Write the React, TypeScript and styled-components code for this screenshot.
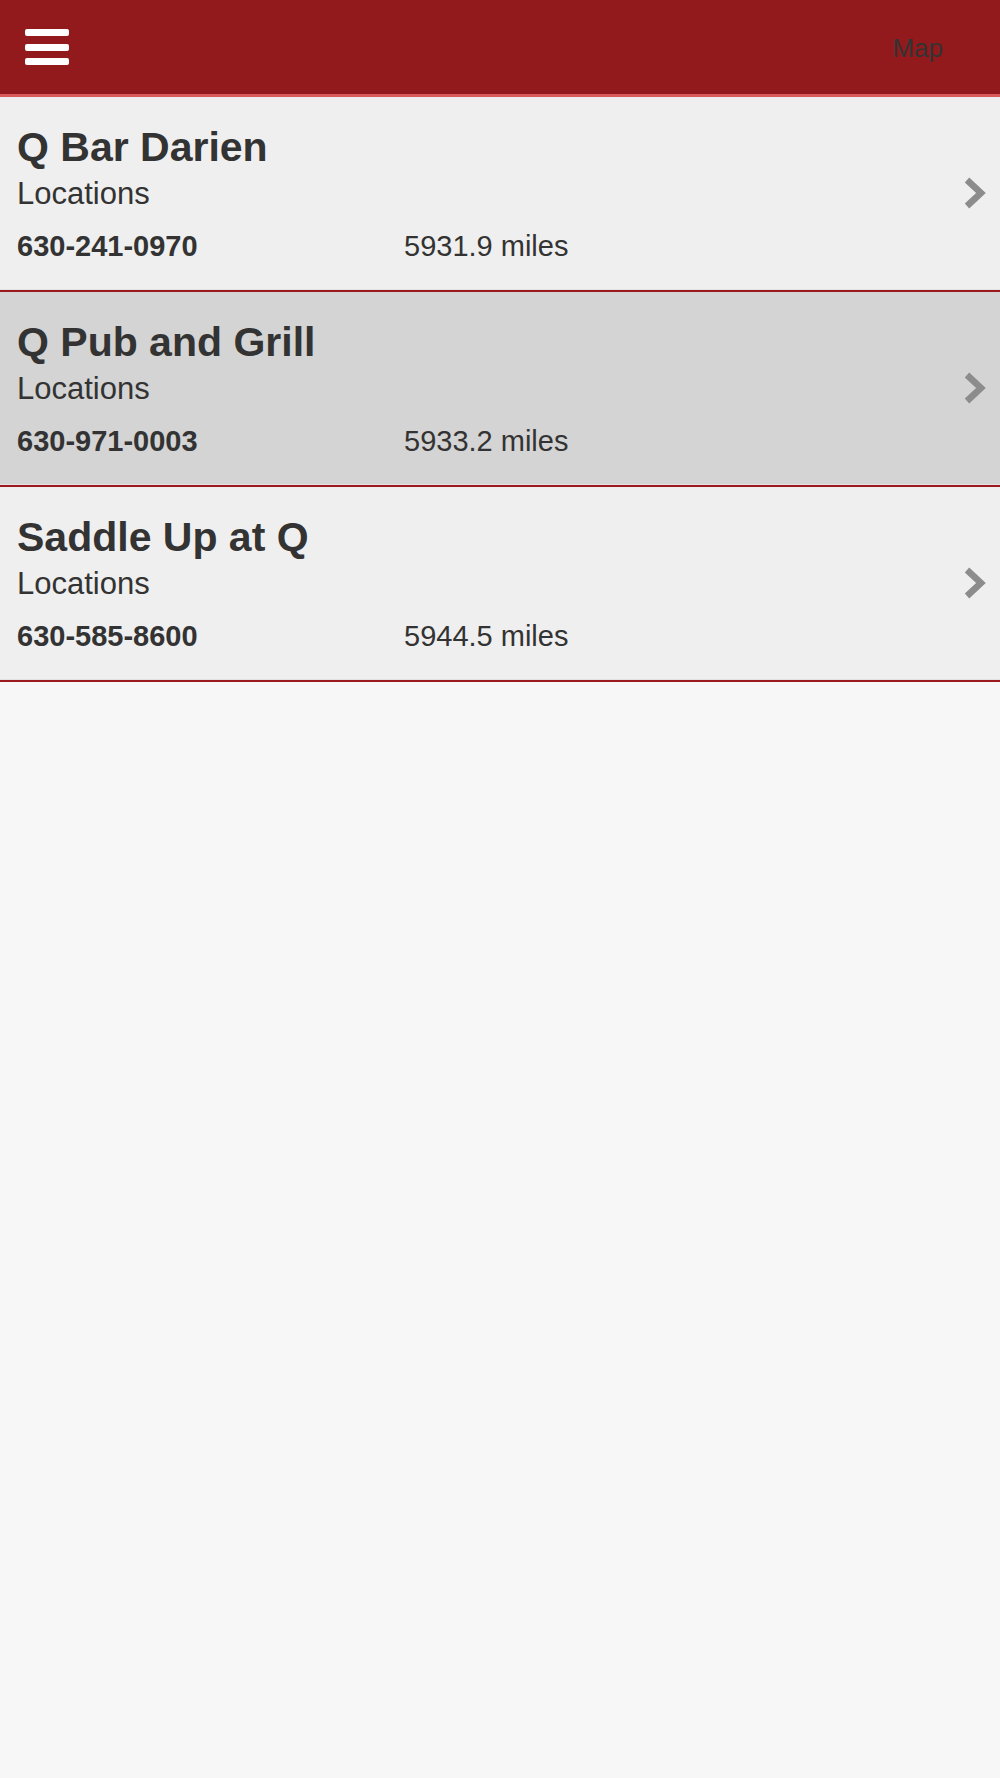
import styled, { createGlobalStyle } from "styled-components";

const GlobalStyle = createGlobalStyle`
  html, body {
    margin: 0;
    padding: 0;
    background: #f7f7f7;
  }
  body {
    font-family: "Liberation Sans", Arial, Helvetica, sans-serif;
    color: #333;
  }
`;

const locations = [
  { name: "Q Bar Darien", phone: "630-241-0970", distance: "5931.9 miles" },
  { name: "Q Pub and Grill", phone: "630-971-0003", distance: "5933.2 miles", active: true },
  { name: "Saddle Up at Q", phone: "630-585-8600", distance: "5944.5 miles" },
];

const App = () => {
  return (
    <Page>
      <GlobalStyle />
      <Header>
        <MenuButton aria-label="Menu">
          <Bar />
          <Bar />
          <Bar />
        </MenuButton>
        <MapLink>Map</MapLink>
      </Header>
      <List>
        {locations.map((loc) => (
          <Row key={loc.name} $active={loc.active}>
            <Details>
              <Title>{loc.name}</Title>
              <Category>Locations</Category>
              <Info>
                <Phone>{loc.phone}</Phone>
                <Distance>{loc.distance}</Distance>
              </Info>
            </Details>
            <Chevron viewBox="0 0 22 32" width="22" height="32">
              <polyline
                points="3,3 17,16 3,29"
                fill="none"
                stroke="#8c8c8c"
                strokeWidth="6.5"
                strokeLinejoin="miter"
              />
            </Chevron>
          </Row>
        ))}
      </List>
    </Page>
  );
};

export default App;

const Page = styled.div`
  min-height: 1778px;
  background: #f7f7f7;
`;

const Header = styled.header`
  height: 94px;
  background: #921a1d;
  border-bottom: 3px solid #d85a5a;
  display: flex;
  align-items: center;
  justify-content: space-between;
  padding: 0 57px 0 25px;
`;

const MenuButton = styled.button`
  display: flex;
  flex-direction: column;
  gap: 7.5px;
  width: 44px;
  padding: 0;
  margin: 0;
  border: none;
  background: none;
`;

const Bar = styled.span`
  display: block;
  height: 7px;
  border-radius: 2px;
  background: #fff;
`;

const MapLink = styled.span`
  font-size: 26px;
  color: #333;
  margin-top: 2px;
`;

const List = styled.div`
  display: flex;
  flex-direction: column;
`;

const Row = styled.div<{ $active?: boolean }>`
  display: flex;
  align-items: center;
  padding: 26px 14px 27px 17px;
  background: ${(p) => (p.$active ? "#d4d4d4" : "#efefef")};
  border-bottom: 2px solid #9c1a1e;
  box-shadow: inset 0 -1px 0 #e2e2e2;
`;

const Details = styled.div`
  flex: 1;
`;

const Title = styled.div`
  font-size: 41px;
  line-height: 48px;
  font-weight: bold;
`;

const Category = styled.div`
  margin-top: 5px;
  font-size: 31px;
  line-height: 36px;
`;

const Info = styled.div`
  margin-top: 17px;
  display: grid;
  grid-template-columns: 387px 1fr;
  font-size: 29px;
  line-height: 34px;
`;

const Phone = styled.span`
  font-weight: bold;
`;

const Distance = styled.span``;

const Chevron = styled.svg`
  flex: none;
  display: block;
`;
